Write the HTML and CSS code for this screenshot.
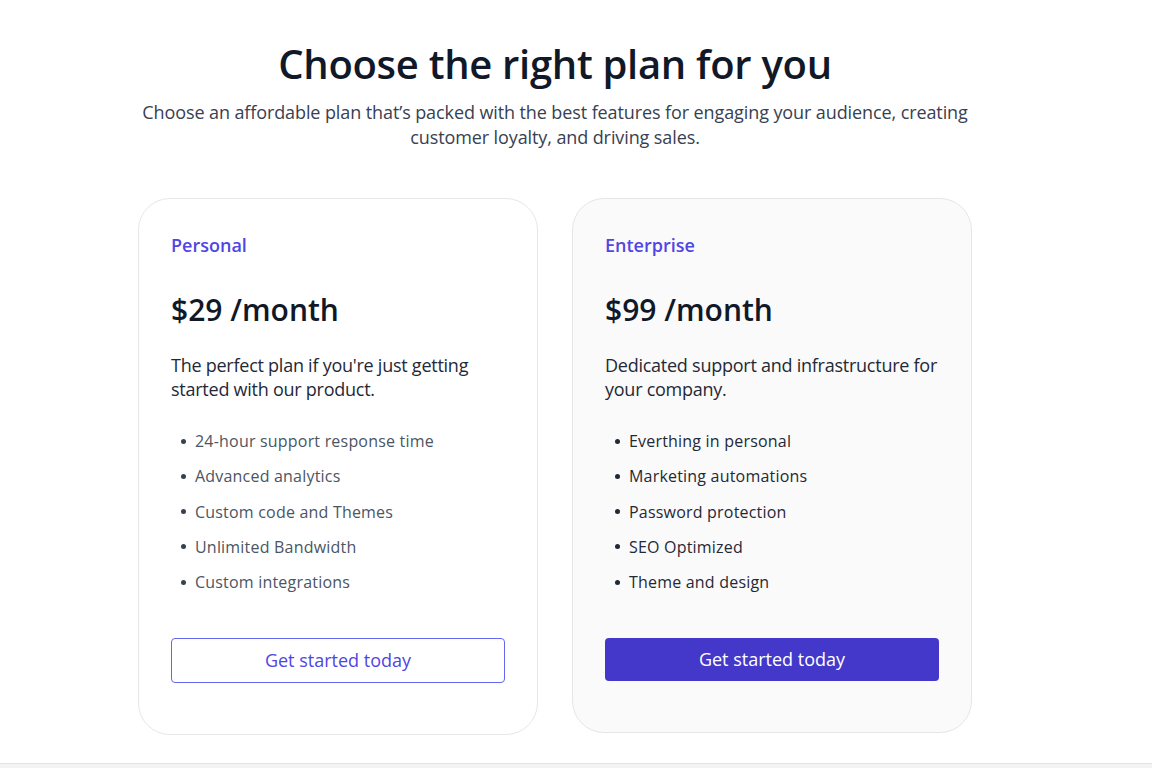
FILE: index.html
```html
<!DOCTYPE html>
<html lang="en">
<head>
<meta charset="utf-8">
<title>Pricing</title>
<link rel="stylesheet" href="styles.css">
</head>
<body>
<main class="pricing">
  <header class="pricing-header">
    <h1 class="title">Choose the right plan for you</h1>
    <p class="subtitle">Choose an affordable plan that’s packed with the best features for engaging your audience, creating customer loyalty, and driving sales.</p>
  </header>
  <div class="plans">
    <section class="plan">
      <h2 class="plan-name">Personal</h2>
      <p class="plan-price">$29 /month</p>
      <p class="plan-desc">The perfect plan if you're just getting started with our product.</p>
      <ul class="features">
        <li>24-hour support response time</li>
        <li>Advanced analytics</li>
        <li>Custom code and Themes</li>
        <li>Unlimited Bandwidth</li>
        <li>Custom integrations</li>
      </ul>
      <a class="btn btn-outline" href="#">Get started today</a>
    </section>
    <section class="plan plan-featured">
      <h2 class="plan-name">Enterprise</h2>
      <p class="plan-price">$99 /month</p>
      <p class="plan-desc">Dedicated support and infrastructure for your company.</p>
      <ul class="features features-dark">
        <li>Everthing in personal</li>
        <li>Marketing automations</li>
        <li>Password protection</li>
        <li>SEO Optimized</li>
        <li>Theme and design</li>
      </ul>
      <a class="btn btn-solid" href="#">Get started today</a>
    </section>
  </div>
</main>
<footer class="footer"></footer>
</body>
</html>
```
FILE: styles.css
```css
* { box-sizing: border-box; }

html, body {
  margin: 0;
  padding: 0;
  background: #ffffff;
}

body {
  font-family: "Open Sans", "Noto Sans", sans-serif;
  color: #111827;
}

.pricing {
  width: 834px;
  margin-left: 138px;
  padding-top: 40px;
  padding-bottom: 28px;
}

.pricing-header {
  text-align: center;
}

.title {
  margin: 0;
  font-size: 40px;
  line-height: 48px;
  font-weight: 600;
  letter-spacing: -0.3px;
  color: #111827;
}

.subtitle {
  margin: 12px 0 0;
  font-size: 18px;
  line-height: 25px;
  font-weight: 400;
  letter-spacing: -0.1px;
  color: #374151;
}

.plans {
  margin-top: 48px;
  display: grid;
  grid-template-columns: 400px 400px;
  column-gap: 34px;
  align-items: start;
}

.plan {
  border: 1px solid #e5e7eb;
  border-radius: 32px;
  background: #ffffff;
  padding: 32px 32px 51px;
  display: flex;
  flex-direction: column;
}

.plan-featured {
  background: #fafafa;
  border-color: #e6e6e6;
}

.plan-name {
  margin: 0;
  font-size: 18px;
  line-height: 28px;
  font-weight: 600;
  color: #5046e5;
}

.plan-price {
  margin: 32px 0 0;
  font-size: 30px;
  line-height: 38px;
  font-weight: 600;
  color: #111827;
}

.plan-desc {
  margin: 24px 0 0;
  font-size: 18px;
  line-height: 24px;
  letter-spacing: -0.25px;
  color: #1f2937;
}

.features {
  list-style: none;
  margin: 28px 0 0;
  padding: 0;
  display: flex;
  flex-direction: column;
  gap: 11.25px;
}

.features li {
  display: flex;
  align-items: center;
  gap: 9px;
  font-size: 16px;
  line-height: 24px;
  letter-spacing: 0.2px;
  color: #4b5563;
}

.features li::before {
  content: "";
  flex: none;
  width: 5px;
  height: 5px;
  margin-left: 10px;
  border-radius: 50%;
  background: #374151;
}

.features-dark li {
  color: #1f2937;
}

.features-dark li::before {
  background: #1f2937;
}

.btn {
  margin-top: 44px;
  display: block;
  text-align: center;
  text-decoration: none;
  font-size: 18px;
  line-height: 27px;
  font-weight: 500;
  border-radius: 4px;
  padding: 8px 16px;
}

.btn-outline {
  border: 1px solid #6366f1;
  color: #4f46e5;
  background: #ffffff;
}

.btn-solid {
  background: #4338ca;
  color: #ffffff;
}

.footer {
  border-top: 1px solid #e2e2e2;
  background: #f3f3f3;
  height: 6px;
}
```
